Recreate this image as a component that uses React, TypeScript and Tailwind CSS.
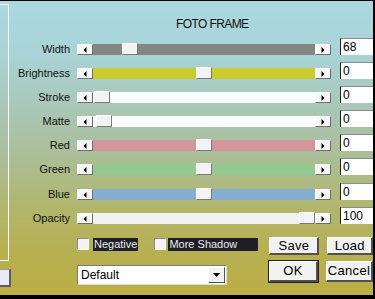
import React from "react";

type Row = { label: string; track: string; thumb: number; value: string; h: string };

const rows: Row[] = [
  { label: "Width", track: "bg-[#858585]", thumb: 29, value: "68", h: "h-[24px]" },
  { label: "Brightness", track: "bg-[#cbcb2e]", thumb: 103, value: "0", h: "h-[24px]" },
  { label: "Stroke", track: "bg-[#fbfbfb]", thumb: 1, value: "0", h: "h-[24px]" },
  { label: "Matte", track: "bg-[#fbfbfb]", thumb: 3, value: "0", h: "h-[24px]" },
  { label: "Red", track: "bg-[#d3949b]", thumb: 103, value: "0", h: "h-[24px]" },
  { label: "Green", track: "bg-[#94ca92]", thumb: 103, value: "0", h: "h-[25px]" },
  { label: "Blue", track: "bg-[#86aed3]", thumb: 103, value: "0", h: "h-[24px]" },
  { label: "Opacity", track: "bg-[#f1f1f1]", thumb: 206, value: "100", h: "h-[24px]" },
];

function ArrowBtn({ dir }: { dir: "left" | "right" }) {
  return (
    <div className="w-[16px] h-full bg-[#f6f6f6] border-t border-l border-t-white border-l-white border-r border-b border-r-[#6e6e6e] border-b-[#6e6e6e] flex items-center justify-center">
      <svg width="4" height="6" viewBox="0 0 4 6">
        {dir === "left" ? <path d="M3.5 0 L0.5 3 L3.5 6Z" fill="#000" /> : <path d="M0.5 0 L3.5 3 L0.5 6Z" fill="#000" />}
      </svg>
    </div>
  );
}

function Btn({ label, cls, def }: { label: string; cls: string; def?: boolean }) {
  return (
    <div
      className={`${cls} flex items-center justify-center bg-[#f2f2f2] border-t border-l border-t-white border-l-white border-r-2 border-b-2 border-r-[#505050] border-b-[#505050] text-[13px] leading-[14px] tracking-[0.3px] text-black ${def ? "outline outline-1 outline-[#202020]" : ""}`}
    >
      {label}
    </div>
  );
}

export default function App() {
  return (
    <div
      className="w-[375px] h-[299px] overflow-hidden border-t border-t-black border-r-2 border-r-black border-b-4 border-b-black flex bg-[linear-gradient(to_bottom,#aad9e2_0%,#a9d3d6_18%,#a9c6b4_38%,#abbd92_55%,#b2b569_72%,#b8af4e_88%,#bbae46_100%)]"
      style={{ fontFamily: '"Liberation Sans", Arial, sans-serif' }}
    >
      <div className="w-[12px] shrink-0 flex flex-col">
        <div className="mt-[3px] w-[9px] h-[257px] border-t border-r border-b border-white" />
        <div className="mt-[8px] w-[11px] h-[18px] bg-[#ebebf3] border-t border-t-[#9a9aa8] border-r-2 border-r-[#5a5a6c] border-b-2 border-b-[#5a5a6c]" />
      </div>
      <div className="flex-1 flex flex-col pt-[16px]">
        <div className="h-[14px] mb-[7px] pl-[164px] text-[12px] leading-[14px] tracking-[-0.6px] text-[#101010]">
          FOTO FRAME
        </div>
        {rows.map((r) => (
          <div key={r.label} className={`flex items-start ${r.h}`}>
            <div className="w-[58px] mt-[5px] text-right text-[11px] leading-[12px] text-[#111]">{r.label}</div>
            <div className="ml-[7px] mt-[6px] flex h-[11px]">
              <ArrowBtn dir="left" />
              <div className={`relative w-[222px] h-full ${r.track}`}>
                <div
                  className="absolute top-[-1px] h-[12px] w-[16px] bg-[#f3f3f3] border-t border-l border-t-white border-l-white border-r border-b border-r-[#7a7a7a] border-b-[#7a7a7a]"
                  style={{ left: `${r.thumb}px` }}
                />
              </div>
              <ArrowBtn dir="right" />
            </div>
            <div className="ml-[9px] flex-1 h-[17px] bg-white border-l border-t border-l-[#202020] border-t-[#8a8a8a] pl-[2px] pt-[1px] text-[12px] leading-[14px] text-black">
              {r.value}
            </div>
          </div>
        ))}
        <div className="mt-[6px] h-[18px] flex items-start">
          <div className="ml-[65px] mt-[1px] w-[12px] h-[12px] bg-[#f4f4f4] border-t border-l border-t-[#8a8a8a] border-l-[#8a8a8a] border-r border-b border-r-white border-b-white" />
          <div className="ml-[4px] mt-[1px] h-[13px] px-[1px] bg-[#1e1e26] text-[#ececec] text-[11px] leading-[13px]">Negative</div>
          <div className="ml-[16px] mt-[1px] w-[12px] h-[12px] bg-[#f4f4f4] border-t border-l border-t-[#8a8a8a] border-l-[#8a8a8a] border-r border-b border-r-white border-b-white" />
          <div className="ml-[2px] mt-[1px] w-[90px] h-[13px] px-[1px] bg-[#1e1e26] text-[#ececec] text-[11px] leading-[13px]">More Shadow</div>
          <Btn label="Save" cls="ml-[11px] w-[50px] h-[18px]" />
          <Btn label="Load" cls="ml-[8px] flex-1 h-[18px]" />
        </div>
        <div className="mt-[6px] h-[21px] flex items-start">
          <div className="ml-[65px] mt-[4px] w-[150px] h-[20px] bg-white border-t border-l border-t-[#7a7a7a] border-l-[#7a7a7a] border-r border-b border-r-[#dcdcdc] border-b-[#dcdcdc] flex items-center">
            <div className="flex-1 pl-[3px] text-[12px] leading-[14px] text-black">Default</div>
            <div className="w-[17px] h-[16px] mr-[1px] bg-[#f2f2f2] border-t border-l border-t-white border-l-white border-r border-b border-r-[#505050] border-b-[#505050] flex items-center justify-center">
              <svg width="7" height="4" viewBox="0 0 7 4">
                <path d="M0 0 L7 0 L3.5 4Z" fill="#000" />
              </svg>
            </div>
          </div>
          <Btn label="OK" cls="ml-[42px] w-[49px] h-[21px]" def />
          <Btn label="Cancel" cls="ml-[8px] flex-1 h-[21px]" />
        </div>
      </div>
    </div>
  );
}
